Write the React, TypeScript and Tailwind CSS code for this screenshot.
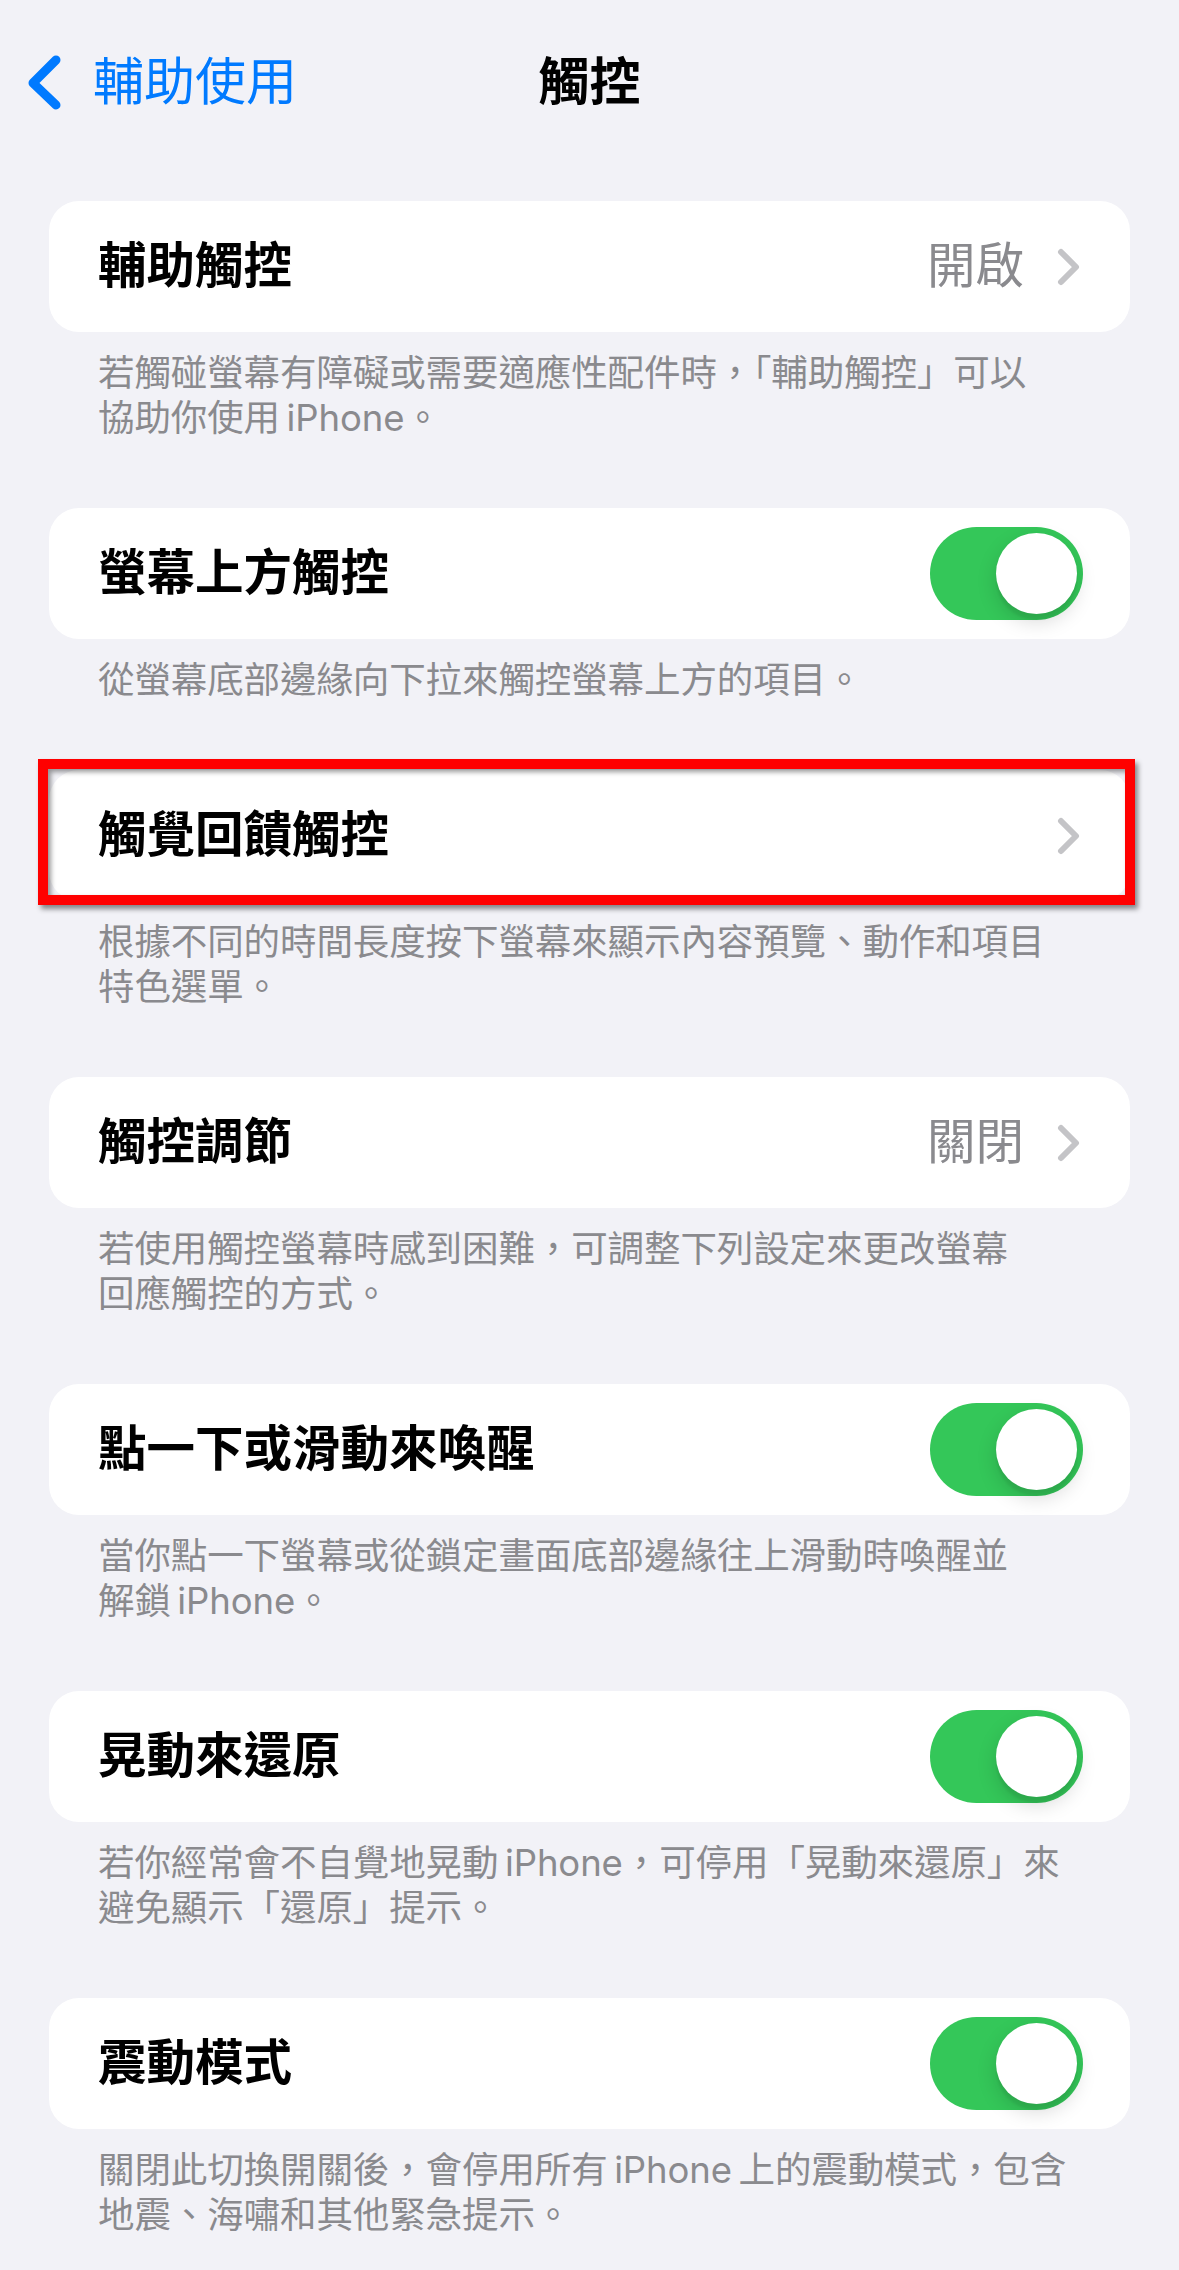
import React from "react";

type Row = {
  label: string;
  kind: "link" | "toggle";
  value?: string;
  footer: string[];
  marked?: boolean;
};

const rows: Row[] = [
  {
    label: "輔助觸控",
    kind: "link",
    value: "開啟",
    footer: ["若觸碰螢幕有障礙或需要適應性配件時，「輔助觸控」可以", "協助你使用\u2009iPhone。"],
  },
  {
    label: "螢幕上方觸控",
    kind: "toggle",
    footer: ["從螢幕底部邊緣向下拉來觸控螢幕上方的項目。"],
  },
  {
    label: "觸覺回饋觸控",
    kind: "link",
    marked: true,
    footer: ["根據不同的時間長度按下螢幕來顯示內容預覽、動作和項目", "特色選單。"],
  },
  {
    label: "觸控調節",
    kind: "link",
    value: "關閉",
    footer: ["若使用觸控螢幕時感到困難，可調整下列設定來更改螢幕", "回應觸控的方式。"],
  },
  {
    label: "點一下或滑動來喚醒",
    kind: "toggle",
    footer: ["當你點一下螢幕或從鎖定畫面底部邊緣往上滑動時喚醒並", "解鎖\u2009iPhone。"],
  },
  {
    label: "晃動來還原",
    kind: "toggle",
    footer: ["若你經常會不自覺地晃動\u2009iPhone，可停用「晃動來還原」來", "避免顯示「還原」提示。"],
  },
  {
    label: "震動模式",
    kind: "toggle",
    footer: ["關閉此切換開關後，會停用所有\u2009iPhone\u2009上的震動模式，包含", "地震、海嘯和其他緊急提示。"],
  },
];

function Chevron() {
  return (
    <svg width="24" height="38" viewBox="0 0 24 38" fill="none" className="shrink-0">
      <path
        d="M4 4 L19 19 L4 34"
        stroke="#c4c4c7"
        strokeWidth="6"
        strokeLinecap="round"
        strokeLinejoin="round"
      />
    </svg>
  );
}

function Toggle() {
  return (
    <div className="flex h-[93px] w-[153px] shrink-0 items-center justify-end rounded-full bg-[#34c759] p-[6px]">
      <div className="h-[81px] w-[81px] rounded-full bg-white shadow-[0_8px_20px_rgba(0,0,0,0.15),0_6px_2px_rgba(0,0,0,0.05)]" />
    </div>
  );
}

function Section({ row }: { row: Row }) {
  return (
    <section>
      <div className="relative mx-[49px]">
        <div
          className={`flex h-[131px] items-center justify-between rounded-[30px] bg-white pl-[49px] ${
            row.kind === "toggle" ? "pr-[47px]" : "pr-[49px]"
          }`}
        >
          <span className="text-[48.5px] font-semibold text-black">{row.label}</span>
          {row.kind === "toggle" ? (
            <Toggle />
          ) : (
            <div className="flex items-center gap-[33px]">
              {row.value && (
                <span className="text-[48.5px] text-[#8a8a8e]">{row.value}</span>
              )}
              <Chevron />
            </div>
          )}
        </div>
        {row.marked && (
          <div className="pointer-events-none absolute -top-[11px] -left-[11px] -right-[5px] -bottom-[4px] border-[10px] border-[#ff0000] shadow-[3px_4px_5px_rgba(0,0,0,0.45),inset_3px_3px_5px_rgba(0,0,0,0.4)]" />
        )}
      </div>
      <div className="mx-[49px] px-[49px] pt-[19px] text-[36.5px] leading-[45px] tracking-[-0.1px] text-[#8a8a8e]">
        {row.footer.map((line) => (
          <div key={line} className="whitespace-nowrap">
            {line}
          </div>
        ))}
      </div>
    </section>
  );
}

export default function App() {
  return (
    <div className="min-h-[2270px] w-full bg-[#f2f2f7] font-['Inter','Noto_Sans_CJK_TC',sans-serif]">
      <header className="grid h-[164px] grid-cols-[1fr_auto_1fr] items-center">
        <div className="flex items-center gap-[29px] pl-[24px]">
          <svg width="40" height="62" viewBox="0 0 40 62" fill="none" className="shrink-0">
            <path
              d="M32 9 L9 32 L32 54"
              stroke="#007aff"
              strokeWidth="9"
              strokeLinecap="round"
              strokeLinejoin="round"
            />
          </svg>
          <span className="text-[51px] text-[#007aff]">輔助使用</span>
        </div>
        <h1 className="text-[51px] font-semibold text-black">觸控</h1>
        <div />
      </header>
      <main className="flex flex-col gap-[67px] pt-[37px]">
        {rows.map((row) => (
          <Section key={row.label} row={row} />
        ))}
      </main>
    </div>
  );
}
